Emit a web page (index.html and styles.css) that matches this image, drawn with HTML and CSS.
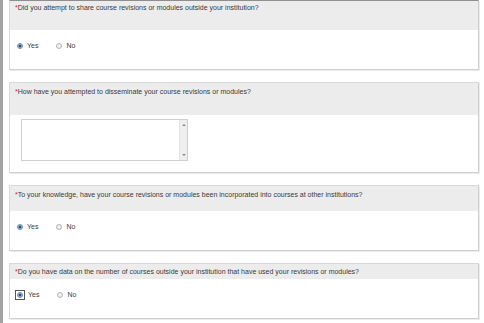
FILE: index.html
```html
<!DOCTYPE html>
<html lang="en">
<head>
    <link rel="stylesheet" href="styles.css">
</head>
<body>
    <div class="page">
        <div class="side-bar"></div>
        <div class="survey">
            <div class="card first">
                <div class="card-head head-a"><span class="req">*</span>Did you attempt to share course revisions or modules outside your institution?</div>
                <div class="card-body">
                    <label class="choice"><input type="radio" name="q1" checked> Yes</label>
                    <label class="choice"><input type="radio" name="q1"> No</label>
                </div>
            </div>

            <div class="card">
                <div class="card-head head-b"><span class="req">*</span>How have you attempted to disseminate your course revisions or modules?</div>
                <div class="card-body text-body">
                    <div class="textbox">
                        <textarea></textarea>
                        <div class="scrollbar">
                            <span class="arrow up"></span>
                            <span class="arrow down"></span>
                        </div>
                    </div>
                </div>
            </div>

            <div class="card">
                <div class="card-head head-c"><span class="req">*</span>To your knowledge, have your course revisions or modules been incorporated into courses at other institutions?</div>
                <div class="card-body">
                    <label class="choice"><input type="radio" name="q3" checked> Yes</label>
                    <label class="choice"><input type="radio" name="q3"> No</label>
                </div>
            </div>

            <div class="card">
                <div class="card-head head-d"><span class="req">*</span>Do you have data on the number of courses outside your institution that have used your revisions or modules?</div>
                <div class="card-body">
                    <label class="choice"><span class="focus"><input type="radio" name="q4" checked></span> Yes</label>
                    <label class="choice"><input type="radio" name="q4"> No</label>
                </div>
            </div>
        </div>
    </div>
</body>
</html>
```

FILE: styles.css
```css
* {
    margin: 0;
    padding: 0;
    box-sizing: border-box;
}
body {
    width: 484px;
    height: 323px;
    overflow: hidden;
    background-color: #fff;
    font-family: "Liberation Sans", Arial, sans-serif;
    font-size: 7px;
    line-height: 9px;
    color: #3a3a3a;
}
.page {
    display: flex;
    height: 323px;
}
.side-bar {
    width: 3px;
    flex-shrink: 0;
    background-color: #a2a2a2;
}
.survey {
    flex: 1;
    display: flex;
    flex-direction: column;
    gap: 12px;
    padding: 0 5px 0 6px;
}
.card {
    border: 1px solid #d8d8d8;
    border-right-color: #cfcfcf;
    border-bottom-color: #cfcfcf;
    box-shadow: 1px 1px 0 #ececec;
}
.card.first {
    border-top-color: #8e8e8e;
}
.card-head {
    background-color: #ececec;
    padding: 2px 5px 0;
}
.head-a {
    height: 29px;
}
.head-b {
    height: 32px;
    padding-top: 4px;
}
.head-c {
    height: 25px;
    padding-top: 4px;
}
.head-d {
    height: 15px;
    padding-top: 3px;
}
.req {
    color: #e02020;
}
.card-body {
    display: flex;
    align-items: center;
    gap: 17px;
    padding: 11px 6px 19px;
    height: 39px;
}
.text-body {
    height: auto;
    padding: 4px 11px 11px;
}
.choice {
    display: flex;
    align-items: center;
    gap: 4px;
}
.choice input {
    appearance: none;
    width: 6px;
    height: 6px;
    border-radius: 50%;
    border: 1px solid #b4b4b4;
    background: radial-gradient(circle, #f4f4f4 40%, #dcdcdc 100%);
    margin: 0 0 0 1px;
}
.choice input:checked {
    border-color: #6e8cab;
    background: radial-gradient(circle, #254f86 45%, #a9c0da 60%, #dfe8f2 100%);
}
.focus {
    display: flex;
    padding: 1px 1px 1px 0;
    outline: 1px solid #555;
    outline-offset: 0;
    margin-left: 0;
}
.textbox {
    display: flex;
    width: 167px;
    height: 42px;
    border: 1px solid #cfcfcf;
    background-color: #fff;
}
textarea {
    flex: 1;
    border: none;
    resize: none;
    outline: none;
    overflow: hidden;
}
.scrollbar {
    width: 8px;
    display: flex;
    flex-direction: column;
    justify-content: space-between;
    align-items: center;
    padding: 4px 0;
    background-color: #efefef;
    border-left: 1px solid #e2e2e2;
}
.arrow {
    width: 0;
    height: 0;
    border-left: 2px solid transparent;
    border-right: 2px solid transparent;
}
.arrow.up {
    border-bottom: 2px solid #8a8a8a;
}
.arrow.down {
    border-top: 2px solid #8a8a8a;
}
```
